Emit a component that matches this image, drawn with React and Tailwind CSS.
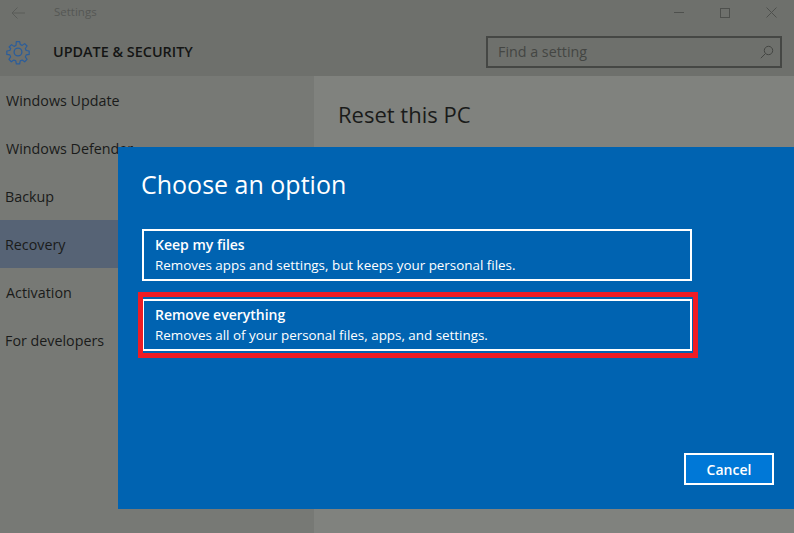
import React from 'react';

const navItems = [
  { label: 'Windows Update', cls: 'pl-[6px]' },
  { label: 'Windows Defender', cls: 'pl-[6px]' },
  { label: 'Backup', cls: 'pl-[5px]' },
  { label: 'Recovery', cls: 'pl-[5px] bg-[#566375]' },
  { label: 'Activation', cls: 'pl-[6px]' },
  { label: 'For developers', cls: 'pl-[5px]' },
];

function Gear() {
  return (
    <svg width="26" height="26" viewBox="0 0 24 24" fill="none" stroke="#2a5d9c" strokeWidth="1.2" strokeLinejoin="round">
      <path d="M10.3 1.5h3.4l.5 3 2 .85 2.5-1.75 2.4 2.4-1.75 2.5.85 2 3 .5v3.4l-3 .5-.85 2 1.75 2.5-2.4 2.4-2.5-1.75-2 .85-.5 3h-3.4l-.5-3-2-.85-2.5 1.75-2.4-2.4 1.75-2.5-.85-2-3-.5v-3.4l3-.5.85-2L3.1 7 5.5 4.6l2.5 1.75 2-.85z" transform="translate(12 12) scale(.92) translate(-12 -12)" />
      <circle cx="12" cy="12" r="3.6" />
    </svg>
  );
}

function Option({ title, text }) {
  return (
    <div className="h-[52px] w-[550px] border-2 border-white pl-[11px] pt-[4px] text-white">
      <div className="text-[14px] leading-[20px] font-semibold">{title}</div>
      <div className="text-[13.4px] leading-[20px]">{text}</div>
    </div>
  );
}

export default function App() {
  return (
    <div className="relative h-[533px] w-[794px] overflow-hidden bg-[#80827e] font-['Open_Sans','Noto_Sans',sans-serif] text-[#1a1b1a]">
      {/* title bar + header */}
      <div className="h-[76px] bg-[#6e706c]">
        <div className="flex h-[25px] items-center">
          <svg className="ml-[11px]" width="14" height="12" viewBox="0 0 14 12" fill="none" stroke="#5a5c59" strokeWidth="1">
            <path d="M14 6H1M6.5 .5 1 6l5.5 5.5" />
          </svg>
          <span className="ml-[29px] -mt-[2px] text-[11.5px] text-[#555754]">Settings</span>
          <div className="ml-auto flex items-center">
            <div className="mr-[36px] h-px w-[10px] bg-[#4e504d]" />
            <div className="mr-[36px] h-[10px] w-[10px] border border-[#4e504d]" />
            <svg className="mr-[17px]" width="11" height="11" viewBox="0 0 11 11" fill="none" stroke="#4e504d" strokeWidth="1">
              <path d="M.5.5l10 10M10.5.5l-10 10" />
            </svg>
          </div>
        </div>
        <div className="flex h-[51px] items-center">
          <div className="ml-[5px] mt-[2px] flex w-[48px] shrink-0">
            <Gear />
          </div>
          <span className="mt-[3px] text-[14.4px] font-semibold text-[#141514]">UPDATE &amp; SECURITY</span>
          <div className="mr-[12px] mt-[3px] ml-auto flex h-[32px] w-[296px] items-center justify-between border-2 border-[#454744] pl-[10px] pr-[6px]">
            <span className="text-[14.3px] text-[#444643]">Find a setting</span>
            <svg width="14" height="14" viewBox="0 0 14 14" fill="none" stroke="#444643" strokeWidth="1">
              <circle cx="8.5" cy="5.5" r="4.2" />
              <path d="M5.5 8.5 .8 13.2" />
            </svg>
          </div>
        </div>
      </div>

      <div className="flex h-[457px]">
        {/* sidebar */}
        <div className="w-[314px] shrink-0 bg-[#777975]">
          {navItems.map((item) => (
            <div key={item.label} className={`flex h-[48px] items-center pt-[2px] text-[14.3px] ${item.cls}`}>
              {item.label}
            </div>
          ))}
        </div>
        <div className="flex-1 bg-[#80827e] pl-[24px] pt-[22px] text-[22px] leading-[32px]">Reset this PC</div>
      </div>

      {/* dialog */}
      <div className="absolute left-[118px] top-[147px] h-[362px] w-[676px] bg-[#0063b1] pl-[23px] pt-[18px] text-white">
        <div className="text-[25px] leading-[38px]">Choose an option</div>
        <div className="ml-[1px] mt-[26px] flex flex-col gap-[18px]">
          <Option title="Keep my files" text="Removes apps and settings, but keeps your personal files." />
          <Option title="Remove everything" text="Removes all of your personal files, apps, and settings." />
        </div>
        <button className="absolute bottom-[24px] right-[20px] h-[32px] w-[90px] border-[2px] border-white bg-[#0078d7] text-[14px] font-semibold text-white">
          Cancel
        </button>
        {/* red highlight drawn over the screenshot */}
        <div className="absolute left-[20px] top-[145px] h-[66px] w-[560px] border-[5px] border-[#ed1c24]" />
      </div>
    </div>
  );
}
